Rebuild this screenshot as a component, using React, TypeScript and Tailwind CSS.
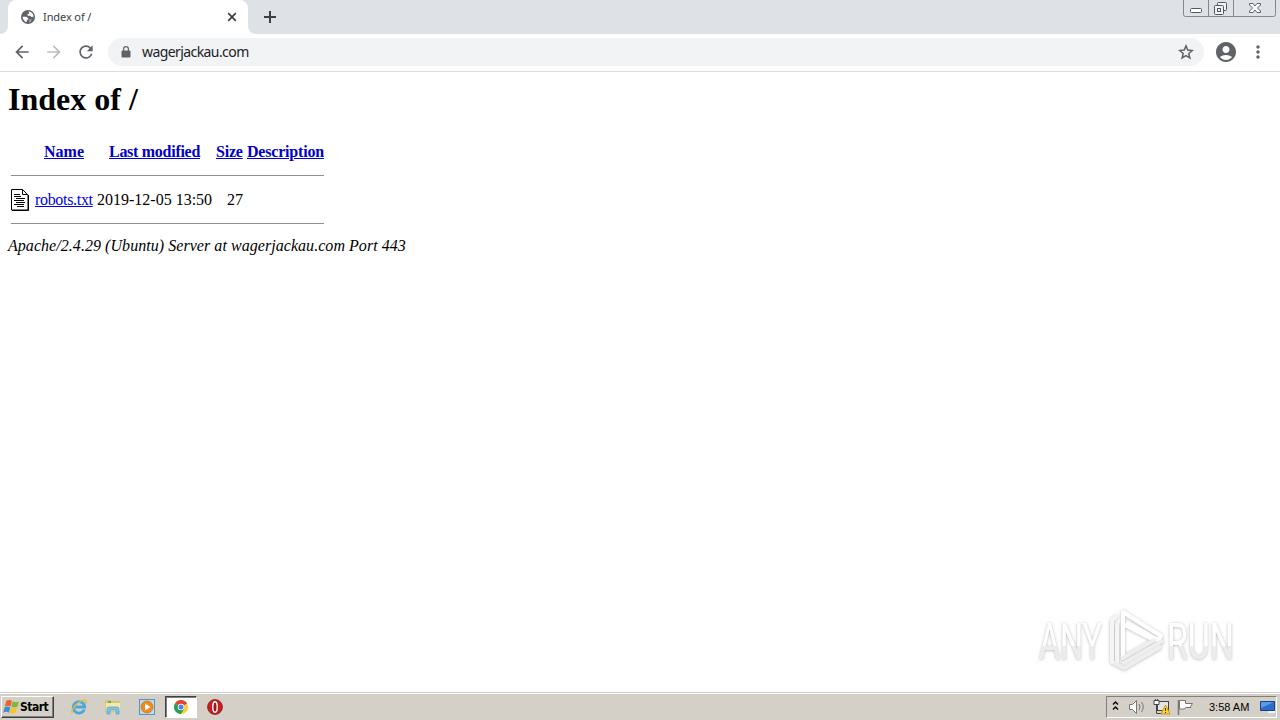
import type { ReactNode } from "react";
import { MdArrowBack, MdArrowForward, MdRefresh, MdAccountCircle, MdMoreVert } from "react-icons/md";

const Globe = () => (
  <svg width="16" height="16" viewBox="0 0 16 16">
    <circle cx="8" cy="8" r="7" fill="#5f6368" />
    <path d="M8.500 2.600q4.600.4 5 5.200l-2 .3-1.300-1.300H7.700l-.2-1.500 1.800-.7z" fill="#fff" />
    <path d="M2.600 7.700h3.600l2 1.600.2 1.500H6.800v2.500q-3.800-1.200-4.200-5.600z" fill="#fff" />
    <path d="M9.600 10.300l2 .3-.7 2-1.800.9z" fill="#aeb1b4" />
  </svg>
);

const TabStrip = () => (
  <div className="flex h-[34px] items-start bg-[#dee1e6] pr-[3px]">
    {/* Flare on the left foot of the tab */}
    <div className="h-[34px] w-2 bg-white">
      <div className="h-full w-full rounded-br-lg bg-[#dee1e6]" />
    </div>
    <div className="flex h-[34px] w-60 items-center rounded-t-lg bg-white pr-[11px] pl-3">
      <Globe />
      <span className="ml-[7px] flex-1 font-['Noto_Sans',sans-serif] text-[11px] tracking-[-0.1px] text-[#3c4043]">
        Index of /
      </span>
      <svg width="10" height="10" viewBox="0 0 10 10" className="text-[#3c4043]">
        <path d="M1.200 1.200l7.600 7.600M8.800 1.200L1.200 8.800" stroke="currentColor" strokeWidth="1.700" />
      </svg>
    </div>
    <div className="h-[34px] w-2 bg-white">
      <div className="h-full w-full rounded-bl-lg bg-[#dee1e6]" />
    </div>
    <svg width="12" height="12" viewBox="0 0 12 12" className="mt-[11px] ml-2">
      <path d="M6 0v12M0 6h12" stroke="#3c4043" strokeWidth="2" />
    </svg>
    {/* Window buttons */}
    <svg width="94" height="18" viewBox="0 0 94 18" fill="none" className="ml-auto">
      <path d="M.5 0v14.500q0 2 2 2h88q2 0 2-2V0M25.500 0v16M50.500 0v16" stroke="#84878e" />
      <rect x="7.500" y="8.500" width="11" height="4" rx="1" fill="#fff" stroke="#54575e" />
      <rect x="34.500" y="2.500" width="9" height="8" rx="1" fill="#f3f4f6" stroke="#54575e" />
      <rect x="31.500" y="5.500" width="9" height="9" rx="1" fill="#f3f4f6" stroke="#54575e" />
      <rect x="34.500" y="8.500" width="3" height="3" stroke="#54575e" />
      <path
        d="M66.500 3.500h3.500l2 2.500 2-2.500h3.500v1.500l-3 3 3 3v1.500h-3.500l-2-2.500-2 2.500h-3.500v-1.500l3-3-3-3z"
        fill="#fff"
        stroke="#54575e"
        strokeWidth=".9"
      />
    </svg>
  </div>
);

const Toolbar = () => (
  <div className="flex h-[38px] items-center border-b border-[#dadce0] bg-white pb-px text-[#5f6368]">
    <MdArrowBack className="ml-3 size-5" />
    <MdArrowForward className="ml-3 size-5 text-[#bbbdc0]" />
    <MdRefresh className="ml-3 size-5" />
    <div className="ml-3 flex h-7 w-[1096px] items-center rounded-full bg-[#f1f3f4] pr-[10px] pl-[13px]">
      <svg width="10" height="12" viewBox="0 0 10 12">
        <path d="M1.500 4.500h7q1 0 1 1v5q0 1-1 1h-7q-1 0-1-1v-5q0-1 1-1z" fill="currentColor" />
        <path d="M2.600 5V3.100a2.400 2.400 0 0 1 4.800 0V5" fill="none" stroke="currentColor" strokeWidth="1.200" />
      </svg>
      <span className="relative -top-px ml-[11px] flex-1 font-['Noto_Sans',sans-serif] text-[14px] tracking-[-0.58px] text-[#202124]">
        wagerjackau.com
      </span>
      <svg width="16" height="16" viewBox="0 0 16 16">
        <path
          d="M8 1.900l1.750 4.200 4.500.4-3.450 3 1.050 4.400L8 11.550 4.150 13.900 5.200 9.500l-3.450-3 4.500-.4z"
          fill="none"
          stroke="currentColor"
          strokeWidth="1.500"
        />
      </svg>
    </div>
    <MdAccountCircle className="ml-2.5 size-6" />
    <MdMoreVert className="ml-[10px] size-5" />
  </div>
);

const HeadLink = ({ className, children }: { className: string; children: ReactNode }) => (
  <span className={`block whitespace-nowrap text-[#0000cc] underline ${className}`}>{children}</span>
);

const FileIcon = () => (
  <svg width="20" height="22" viewBox="0 0 20 22" className="block">
    <path d="M.5.500h11l5.500 5.500v15H.5z" fill="#fff" stroke="#000" />
    <path d="M11.500.500v5h5.500M17.500 6v15.500H1" fill="none" stroke="#000" />
    <path d="M3 5.500h6M3 7.500h7M5 9.500h9M3 11.500h10M5 13.500h9M3 15.500h10M6 17.500h7" stroke="#000" />
  </svg>
);

const DirectoryIndex = () => (
  <main className="h-[620px] bg-white px-2 pt-[9px] font-['Liberation_Serif',serif] text-base text-black">
    <h1 className="h-[37px] text-[32px] leading-[37px] font-bold whitespace-nowrap">Index of /</h1>
    <div className="mt-[23px] ml-[3px] w-[313px]">
      <div className="flex h-[22px] items-center font-bold">
        <HeadLink className="ml-[33px] w-[65px]">Name</HeadLink>
        <HeadLink className="w-[107px] tracking-[-0.28px]">Last modified</HeadLink>
        <HeadLink className="w-[31px] tracking-[-0.2px]">Size</HeadLink>
        <HeadLink className="tracking-[-0.2px]">Description</HeadLink>
      </div>
      <hr className="mt-3 border-0 border-t border-[#909090]" />
      <div className="mt-3 flex h-6 items-center">
        <FileIcon />
        <span className="ml-1 w-[62px] tracking-[-0.32px] text-[#0000ee]">
          <span className="underline">robots.txt</span>
        </span>
        <span className="w-[130px] whitespace-nowrap">2019-12-05 13:50</span>
        <span>27</span>
      </div>
      <hr className="mt-[11px] border-0 border-t border-[#909090]" />
    </div>
    <address className="mt-[13px] leading-[18px] tracking-[0.05px] whitespace-nowrap">
      Apache/2.4.29 (Ubuntu) Server at wagerjackau.com Port 443
    </address>
  </main>
);

const Watermark = () => (
  <svg width="240" height="80" viewBox="0 0 240 80" className="absolute top-[605px] left-[1030px] overflow-visible">
    <defs>
      <linearGradient id="fade" x1="0" y1="0" x2="0" y2="1">
        <stop offset="0.56" stopColor="#fff" />
        <stop offset="0.57" stopColor="#ededed" />
      </linearGradient>
      <filter id="glow" x="-10%" y="-10%" width="120%" height="130%">
        <feDropShadow dx="0" dy="0.500" stdDeviation="1.700" floodColor="#777" floodOpacity="0.55" />
      </filter>
    </defs>
    <g filter="url(#glow)" fill="url(#fade)" fontFamily="Roboto, sans-serif" fontSize="50">
      <text x="9" y="54" textLength="63" lengthAdjust="spacingAndGlyphs">ANY</text>
      <text x="137" y="54" textLength="67" lengthAdjust="spacingAndGlyphs">RUN</text>
      <g fill="none" strokeWidth="4" strokeLinejoin="round" strokeLinecap="round">
        <path d="M86 12l-4 3v42l5 2V20" stroke="#f5f5f5" />
        <path d="M93 53V19l31 16" stroke="#fff" />
        <path d="M93 20V7l38 24-3 4-30-17" stroke="#fff" />
        <path d="M93 53l31-18M94 58l38-22M94 63l36-21M86 59l8 4" stroke="#eee" />
      </g>
    </g>
  </svg>
);

const IeIcon = () => (
  <svg width="18" height="18" viewBox="0 0 18 18" fill="none">
    <path d="M14.300 11.500A5.700 5.700 0 1 1 14.700 9H5" stroke="#4aa8df" strokeWidth="2.800" />
    <path d="M2.500 15.500C-1 13 8 3 14 2.200c3-.3 2.500 2 1.300 3.800" stroke="#e6b93b" strokeWidth="1.300" />
  </svg>
);

const ExplorerIcon = () => (
  <svg width="18" height="18" viewBox="0 0 18 18">
    <path d="M1 3l1-1h5l1 1h8v11H1z" fill="#dcc473" />
    <path d="M2 5h14v8H2z" fill="#f5e7a5" />
    <path d="M4 3h3v2H4z" fill="#63ae67" />
    <path d="M3 16v-5q0-2 2-2h8q2 0 2 2v5h-3v-4H6v4z" fill="#7cc5e5" stroke="#4f9dca" strokeWidth=".7" />
  </svg>
);

const MediaIcon = () => (
  <svg width="16" height="16" viewBox="0 0 16 16">
    <rect x=".5" y=".5" width="15" height="15" fill="#b9dbf5" stroke="#5b93c5" />
    <circle cx="8" cy="8" r="6" fill="#f18a17" stroke="#d56e08" strokeWidth=".7" />
    <path d="M6 4.500l5.500 3.500L6 11.500z" fill="#fff" />
  </svg>
);

const ChromeIcon = () => (
  <svg width="14" height="14" viewBox="0 0 14 14">
    <circle cx="7" cy="7" r="7" fill="#fc3" />
    <path d="M7 7L.94 3.500a7 7 0 0 1 12.120 0z" fill="#e34133" />
    <path d="M7 7L.94 3.500A7 7 0 0 0 7 14l3-5z" fill="#23a05a" />
    <circle cx="7" cy="7" r="3.300" fill="#fff" />
    <circle cx="7" cy="7" r="2.500" fill="#4a83e8" />
  </svg>
);

const OperaIcon = () => (
  <svg width="16" height="16" viewBox="0 0 16 16">
    <circle cx="8" cy="8" r="7.500" fill="#c21f22" stroke="#8b1518" strokeWidth=".7" />
    <ellipse cx="8" cy="8" rx="2.200" ry="5.200" fill="#a01417" stroke="#fff" strokeWidth="1.400" />
  </svg>
);

const StartFlag = () => (
  <svg width="17" height="16" viewBox="0 0 17 16">
    <path d="M3.300 1.800q3.200-1.800 5.600 0L7.500 7.500q-2.700-1.500-5.700 0z" fill="#ec6330" />
    <path d="M9.500 2.200q2.700 1.700 6.500 0l-1.500 5.600q-3.200 1.300-6.300-.1z" fill="#82b93c" />
    <path d="M1.600 8.200q2.700-1.400 5.700 0L5.900 13.700q-2.700-1.700-5.700 0z" fill="#428bd5" />
    <path d="M8 8.500q2.800 1.400 6.300.1l-1.500 5.200q-2.800 1.400-6.200 0z" fill="#f6c431" />
  </svg>
);

const TrayIcons = () => (
  <svg width="84" height="20" viewBox="0 0 84 20" fill="none">
    <path d="M2 7.500l2.500-2.500L7 7.500M2 12.500L4.500 10 7 12.500" stroke="#000" strokeWidth="1.400" />
    {/* Speaker */}
    <path d="M18.500 7.500h3l4-4v13l-4-4h-3z" fill="#fff" stroke="#777" />
    <path d="M28 7q2 3 0 6M30.500 5q3.500 5 0 10" stroke="#777" />
    {/* Network with warning badge */}
    <rect x="46.500" y="4.500" width="11" height="9" fill="#e5e5e5" stroke="#444" />
    <path d="M43 3.500h5v4h-5zM44.500 2v2M46.500 2v2" fill="#fff" stroke="#444" />
    <path d="M45.500 8v8.500h6" stroke="#444" />
    <path d="M54.500 8l4.500 9h-9z" fill="#f9d52d" stroke="#c69b12" />
    <path d="M54.500 11v3M54.500 15v1.200" stroke="#333" />
    {/* Action center flag */}
    <path d="M67.500 3v15" stroke="#777" strokeWidth="1.500" />
    <path d="M68.500 3.500h6v3h7l-2 3 .5 1h-5.500l-1 1.500h-5z" fill="#fff" stroke="#777" />
  </svg>
);

const Taskbar = () => (
  <footer className="flex h-7 items-center border-t border-[#d4d0c8] bg-[#d4d0c8] pt-px shadow-[inset_0_1px_0_#fff]">
    <div className="ml-px flex h-[22px] w-[53px] items-center border border-t-white border-r-[#404040] border-b-[#404040] border-l-white pl-px shadow-[inset_-1px_-1px_0_#808080]">
      <StartFlag />
      <span className="font-['DejaVu_Sans_Condensed','DejaVu_Sans',sans-serif] text-[12px] font-bold tracking-[-0.5px] text-black">
        Start
      </span>
    </div>
    <div className="ml-4 flex items-center">
      <IeIcon />
      <div className="ml-4">
        <ExplorerIcon />
      </div>
      <div className="ml-[17px]">
        <MediaIcon />
      </div>
      <div className="ml-[10px] flex h-[22px] w-8 items-center justify-center border border-t-[#404040] border-r-white border-b-white border-l-[#404040] bg-white shadow-[inset_1px_1px_0_#808080]">
        <ChromeIcon />
      </div>
      <div className="ml-[10px]">
        <OperaIcon />
      </div>
    </div>
    <div className="mr-[3px] ml-auto flex h-[22px] w-[171px] items-center border border-t-[#808080] border-r-white border-b-white border-l-[#808080] pl-1">
      <TrayIcons />
      <span className="ml-[14px] w-[51px] font-['Liberation_Sans',sans-serif] text-[11px] whitespace-nowrap text-black">
        3:58 AM
      </span>
      <svg width="16" height="14" viewBox="0 0 16 14">
        <path d="M.5 1.500h14v9H.5z" fill="#2c6ccc" stroke="#1b417f" />
        <path d="M1 2h13L1 8z" fill="#5b9ce8" />
        <path d="M8 12h7" stroke="#edf4fa" strokeWidth="2" />
      </svg>
    </div>
  </footer>
);

const App = () => (
  <div className="relative h-[720px] w-[1280px] overflow-hidden bg-white">
    <TabStrip />
    <Toolbar />
    <DirectoryIndex />
    <Taskbar />
    <Watermark />
  </div>
);

export default App;
